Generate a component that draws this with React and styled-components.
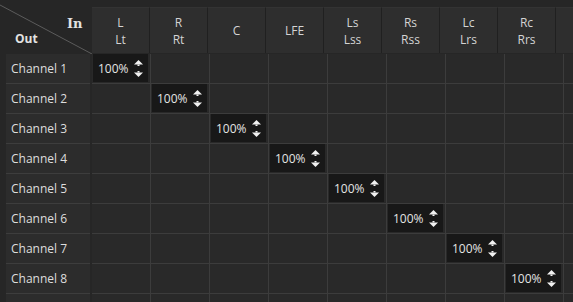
import React from 'react';
import styled, { createGlobalStyle } from 'styled-components';

const GlobalStyle = createGlobalStyle`
  html, body {
    margin: 0;
    padding: 0;
    background: #262626;
    overflow: hidden;
  }
  body {
    font-family: "Open Sans", "Noto Sans", sans-serif;
    font-size: 12px;
    color: #dcdcdc;
  }
`;

const inputs = [
  ['L', 'Lt'],
  ['R', 'Rt'],
  ['C'],
  ['LFE'],
  ['Ls', 'Lss'],
  ['Rs', 'Rss'],
  ['Lc', 'Lrs'],
  ['Rc', 'Rrs'],
  [''],
];

const outputs = ['Channel 1', 'Channel 2', 'Channel 3', 'Channel 4', 'Channel 5', 'Channel 6', 'Channel 7', 'Channel 8', ''];

const Spinner = () => (
  <svg width="9" height="17" viewBox="0 0 9 17">
    <path d="M4.5 0 L9 4.5 L0 4.5 Z" fill="#f2f2f2" />
    <rect x="3.5" y="4.5" width="2" height="1.5" fill="#f2f2f2" />
    <rect x="3.5" y="11" width="2" height="1.5" fill="#f2f2f2" />
    <path d="M0 12.5 L9 12.5 L4.5 17 Z" fill="#f2f2f2" />
  </svg>
);

const Matrix = () => (
  <Wrap>
    <HeaderRow>
      <Corner>
        <svg width="92" height="54" viewBox="0 0 92 54">
          <line x1="0" y1="5" x2="92" y2="54" stroke="#5c5c5c" strokeWidth="1" />
        </svg>
        <InLabel>In</InLabel>
        <OutLabel>Out</OutLabel>
      </Corner>
      {inputs.map((lines, i) => (
        <ColHead key={i}>
          {lines.map((l) => (
            <span key={l}>{l}</span>
          ))}
        </ColHead>
      ))}
    </HeaderRow>
    {outputs.map((name, r) => (
      <Row key={r}>
        <RowHead>{name}</RowHead>
        {inputs.map((_, c) => (
          <Cell key={c}>
            {r === c && name && (
              <NumBox>
                <span>100%</span>
                <Spinner />
              </NumBox>
            )}
          </Cell>
        ))}
      </Row>
    ))}
  </Wrap>
);

export default function App() {
  return (
    <>
      <GlobalStyle />
      <Matrix />
    </>
  );
}

const Wrap = styled.div`
  width: 573px;
  height: 302px;
  overflow: hidden;
  display: flex;
  flex-direction: column;
`;

const HeaderRow = styled.div`
  display: flex;
  height: 54px;
  flex-shrink: 0;
`;

const Corner = styled.div`
  position: relative;
  width: 92px;
  flex-shrink: 0;
  svg {
    position: absolute;
    left: 0;
    top: 0;
  }
`;

const InLabel = styled.span`
  position: absolute;
  left: 67px;
  top: 16px;
  font-family: "DejaVu Serif", serif;
  font-weight: bold;
  font-size: 13px;
  color: #e2e2e2;
`;

const OutLabel = styled.span`
  position: absolute;
  left: 15px;
  top: 30px;
  font-weight: bold;
  font-size: 12px;
  color: #e2e2e2;
`;

const ColHead = styled.div`
  width: 58px;
  flex-shrink: 0;
  margin-top: 7px;
  height: 46px;
  background: #2e2e2e;
  border-right: 1px solid #202020;
  border-top: 1px solid #333;
  box-sizing: border-box;
  display: flex;
  flex-direction: column;
  align-items: center;
  justify-content: center;
  line-height: 17px;
  color: #d4d4d4;
  font-size: 12px;
`;

const Row = styled.div`
  display: flex;
  height: 30px;
  flex-shrink: 0;
`;

const RowHead = styled.div`
  width: 84px;
  margin-left: 6px;
  margin-right: 2px;
  flex-shrink: 0;
  box-sizing: border-box;
  background: #2c2c2c;
  border-bottom: 1px solid #3d3d3d;
  display: flex;
  align-items: center;
  padding-left: 5px;
  color: #dedede;
  font-size: 12px;
`;

const Cell = styled.div`
  width: 59px;
  flex-shrink: 0;
  box-sizing: border-box;
  background: #292929;
  border-right: 1px solid #3c3c3c;
  border-bottom: 1px solid #3c3c3c;
  display: flex;
  align-items: flex-start;
  padding-left: 1px;
`;

const NumBox = styled.div`
  width: 55px;
  height: 28px;
  box-sizing: border-box;
  background: #181818;
  display: flex;
  align-items: center;
  justify-content: space-between;
  padding: 0 5px 0 5px;
  color: #e4e4e4;
  font-size: 12px;
`;
